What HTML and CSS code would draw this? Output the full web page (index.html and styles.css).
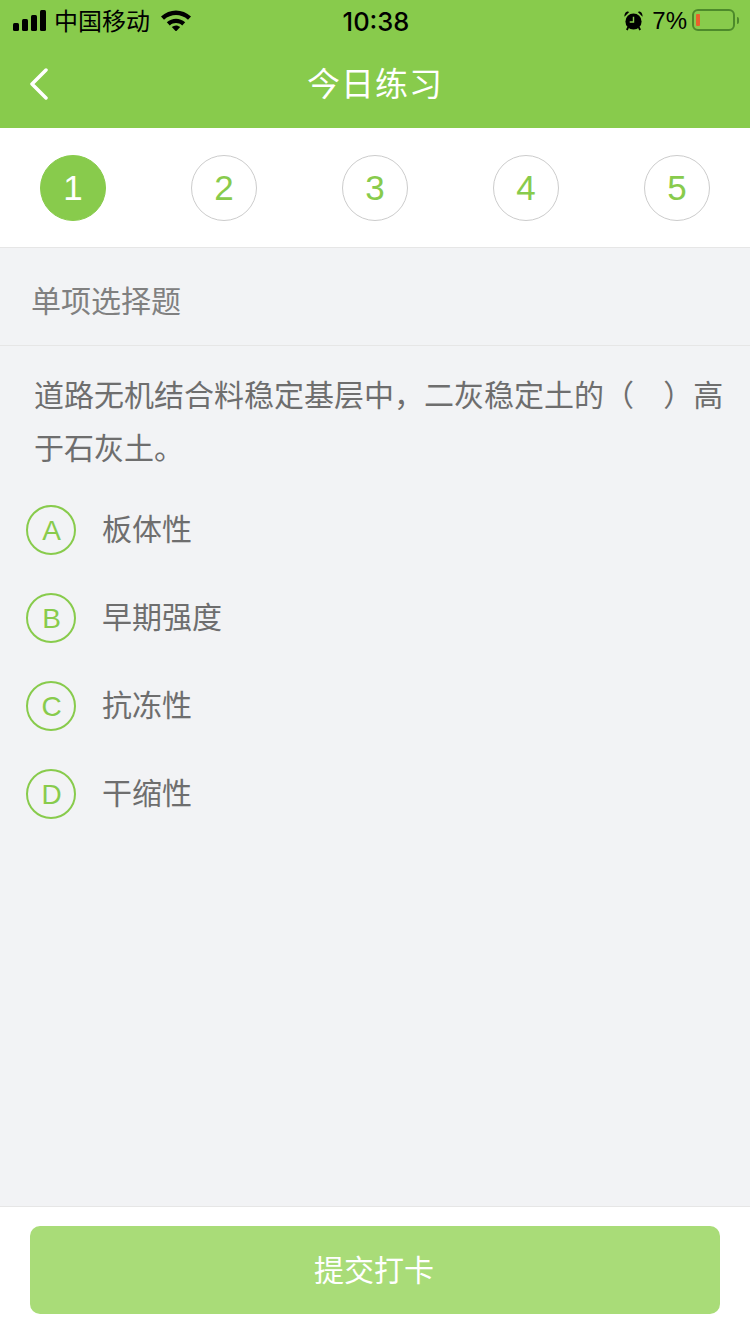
FILE: index.html
```html
<!DOCTYPE html>
<html lang="zh-CN">
<head>
<meta charset="UTF-8" />
<meta name="viewport" content="width=device-width, initial-scale=1" />
<title>今日练习</title>
<link rel="stylesheet" href="styles.css">
</head>
<body>
  <div class="page">
    <header class="header">
      <div class="status-bar">
        <div class="status-left">
          <svg class="signal" viewBox="0 0 33 21" aria-hidden="true">
            <rect x="0" y="13" width="6" height="8" rx="1.5"/>
            <rect x="9" y="9" width="6" height="12" rx="1.5"/>
            <rect x="18" y="5" width="6" height="16" rx="1.5"/>
            <rect x="27" y="0" width="6" height="21" rx="1.5"/>
          </svg>
          <span class="carrier">中国移动</span>
          <svg class="wifi" viewBox="0 0 30 22" aria-hidden="true">
            <path d="M0 7.5C8.500-.5 21.500-.5 30 7.500l-3 3.200C19.800 4.500 10.200 4.500 3 10.700z"/>
            <path d="M5.800 13.300C11.200 8.500 18.800 8.500 24.200 13.300l-3 3.200C17.500 13.300 12.500 13.300 8.800 16.500z"/>
            <path d="M10.800 18c2.700-2.100 5.700-2.100 8.400 0L15 22.500z"/>
          </svg>
        </div>
        <span class="clock">10:38</span>
        <div class="status-right">
          <svg class="alarm" viewBox="0 0 20 22" aria-hidden="true">
            <circle cx="10" cy="12" r="8.5"/>
            <path d="M.5 7 5.500 2C3.200.2.200 2.800.5 7zM19.500 7 14.500 2C16.800.2 19.800 2.800 19.500 7z"/>
            <path d="M4.500 18 3 21M15.500 18 17 21" stroke="#000" stroke-width="2" fill="none"/>
            <path d="M10 7v5.500H6" stroke="#88cb4c" stroke-width="1.5" fill="none"/>
          </svg>
          <span class="battery-text">7%</span>
          <div class="battery">
            <div class="battery-level"></div>
          </div>
          <div class="battery-cap"></div>
        </div>
      </div>
      <div class="nav-bar">
        <svg class="back" viewBox="0 0 20 32" aria-hidden="true">
          <path d="M17 2 3 16l14 14"/>
        </svg>
        <h1 class="title">今日练习</h1>
      </div>
    </header>

    <nav class="steps">
      <div class="step active">1</div>
      <div class="step">2</div>
      <div class="step">3</div>
      <div class="step">4</div>
      <div class="step">5</div>
    </nav>

    <main class="content">
      <div class="question-type">单项选择题</div>
      <p class="question">道路无机结合料稳定基层中，二灰稳定土的（&nbsp;&nbsp;&nbsp;）高于石灰土。</p>
      <ul class="options">
        <li class="option"><span class="option-key">A</span><span class="option-text">板体性</span></li>
        <li class="option"><span class="option-key">B</span><span class="option-text">早期强度</span></li>
        <li class="option"><span class="option-key">C</span><span class="option-text">抗冻性</span></li>
        <li class="option"><span class="option-key">D</span><span class="option-text">干缩性</span></li>
      </ul>
    </main>

    <footer class="footer">
      <button class="submit" type="button">提交打卡</button>
    </footer>
  </div>
</body>
</html>
```

FILE: styles.css
```css
* {margin: 0; padding: 0; box-sizing: border-box;}
body {
  font-family: "Liberation Sans", "Noto Sans CJK SC", sans-serif;
  background: #f2f3f5;
  color: #666;
}
.page {
  width: 750px;
  height: 1334px;
  display: flex;
  flex-direction: column;
  overflow: hidden;
}

/* header */
.header {
  height: 128px;
  background: #88cb4c;
  flex-shrink: 0;
}
.status-bar {
  height: 40px;
  padding: 0 11px 0 13px;
  display: grid;
  grid-template-columns: 1fr auto 1fr;
  align-items: center;
  color: #000;
}
.status-left {
  display: flex;
  align-items: center;
}
.signal {
  width: 33px;
  height: 21px;
  fill: #000;
}
.carrier {
  font-size: 24px;
  margin-left: 8px;
  margin-top: -2px;
}
.wifi {
  width: 30px;
  height: 22px;
  margin-left: 11px;
  fill: #000;
}
.clock {
  font-size: 25.5px;
  font-family: "Inter", "Liberation Sans", sans-serif;
  font-weight: 500;
  margin-top: 2px;
}
.status-right {
  display: flex;
  align-items: center;
  justify-content: flex-end;
}
.alarm {
  width: 19px;
  height: 21px;
  fill: #000;
}
.battery-text {
  font-size: 24px;
  margin: 2px 0 0 9px;
}
.battery {
  width: 43px;
  height: 22px;
  margin-left: 5px;
  border: 2px solid #4d8a2b;
  border-radius: 6px;
  padding: 3px 2px;
}
.battery-level {
  width: 4px;
  height: 100%;
  background: #e8612c;
  border-radius: 1px;
}
.battery-cap {
  width: 2px;
  height: 7px;
  margin-left: 2px;
  background: #4d8a2b;
  border-radius: 0 2px 2px 0;
}
.nav-bar {
  height: 88px;
  padding-bottom: 4px;
  position: relative;
  display: flex;
  align-items: center;
  justify-content: center;
}
.back {
  position: absolute;
  left: 29px;
  top: 28px;
  width: 20px;
  height: 32px;
  fill: none;
  stroke: #fff;
  stroke-width: 3.5;
  stroke-linecap: round;
  stroke-linejoin: round;
}
.title {
  font-size: 33px;
  font-weight: 400;
  color: #fff;
  letter-spacing: 1px;
}

/* steps */
.steps {
  height: 120px;
  padding: 27px 40px 0;
  background: #fff;
  border-bottom: 1px solid #e6e6e6;
  display: flex;
  justify-content: space-between;
  align-items: flex-start;
  flex-shrink: 0;
}
.step {
  width: 66px;
  height: 66px;
  border-radius: 50%;
  border: 1px solid #ccc;
  color: #88cb4c;
  font-size: 35px;
  display: flex;
  align-items: center;
  justify-content: center;
}
.step.active {
  background: #88cb4c;
  border-color: #88cb4c;
  color: #fff;
}

/* question */
.content {
  flex: 1;
}
.question-type {
  height: 98px;
  padding: 4px 0 0 31px;
  border-bottom: 1px solid #e6e6e6;
  display: flex;
  align-items: center;
  font-size: 30px;
  color: #808080;
}
.question {
  padding: 23px 25px 0 34px;
  font-size: 30px;
  line-height: 53px;
  word-spacing: 1.4px;
  color: #6e6e6e;
}
.options {
  list-style: none;
  padding: 30px 0 0 26px;
}
.option {
  height: 88px;
  display: flex;
  align-items: flex-start;
}
.option-key {
  width: 50px;
  height: 50px;
  padding: 2px 0 0 1px;
  border-radius: 50%;
  border: 2px solid #88cb4c;
  color: #88cb4c;
  font-size: 28px;
  display: flex;
  align-items: center;
  justify-content: center;
}
.option-text {
  margin-left: 26px;
  font-size: 30px;
  line-height: 50px;
  color: #6e6e6e;
}

/* footer */
.footer {
  height: 128px;
  padding: 19px 30px 0;
  background: #fff;
  border-top: 1px solid #e6e6e6;
  flex-shrink: 0;
}
.submit {
  width: 690px;
  height: 88px;
  padding: 0 2px 4px 0;
  border: none;
  border-radius: 10px;
  background: #a9dc78;
  color: #fff;
  font-family: inherit;
  font-size: 30px;
}
```
